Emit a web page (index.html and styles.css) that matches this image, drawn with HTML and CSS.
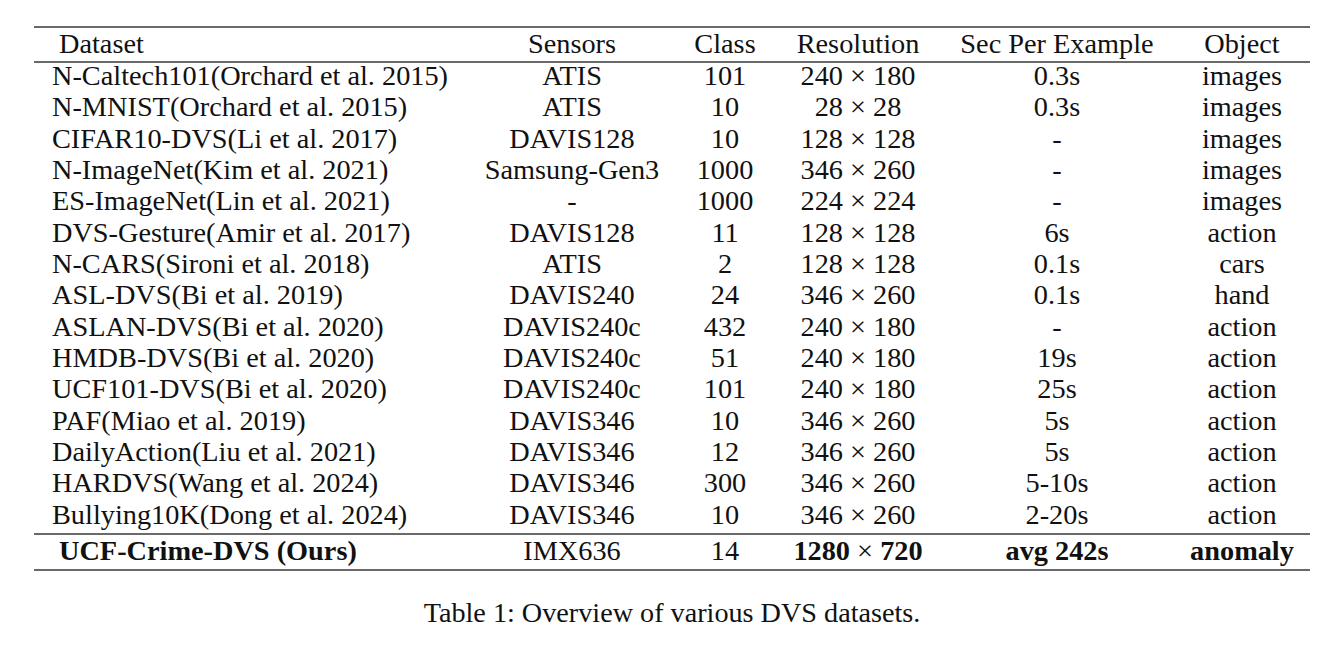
FILE: index.html
```html
<!DOCTYPE html>
<html>
<head>
<meta charset="utf-8">
<link rel="stylesheet" href="styles.css">
</head>
<body>
<div class="page">
<table class="datasets">
<colgroup>
<col class="c-name"><col class="c-sensor"><col class="c-class"><col class="c-res"><col class="c-sec"><col class="c-obj">
</colgroup>
<thead>
<tr><th class="name head-name">Dataset</th><th>Sensors</th><th>Class</th><th>Resolution</th><th>Sec Per Example</th><th>Object</th></tr>
</thead>
<tbody>
<tr><td class="name">N-Caltech101(Orchard et al. 2015)</td><td>ATIS</td><td>101</td><td>240 × 180</td><td>0.3s</td><td>images</td></tr>
<tr><td class="name">N-MNIST(Orchard et al. 2015)</td><td>ATIS</td><td>10</td><td>28 × 28</td><td>0.3s</td><td>images</td></tr>
<tr><td class="name">CIFAR10-DVS(Li et al. 2017)</td><td>DAVIS128</td><td>10</td><td>128 × 128</td><td>-</td><td>images</td></tr>
<tr><td class="name">N-ImageNet(Kim et al. 2021)</td><td>Samsung-Gen3</td><td>1000</td><td>346 × 260</td><td>-</td><td>images</td></tr>
<tr><td class="name">ES-ImageNet(Lin et al. 2021)</td><td>-</td><td>1000</td><td>224 × 224</td><td>-</td><td>images</td></tr>
<tr><td class="name">DVS-Gesture(Amir et al. 2017)</td><td>DAVIS128</td><td>11</td><td>128 × 128</td><td>6s</td><td>action</td></tr>
<tr><td class="name">N-CARS(Sironi et al. 2018)</td><td>ATIS</td><td>2</td><td>128 × 128</td><td>0.1s</td><td>cars</td></tr>
<tr><td class="name">ASL-DVS(Bi et al. 2019)</td><td>DAVIS240</td><td>24</td><td>346 × 260</td><td>0.1s</td><td>hand</td></tr>
<tr><td class="name">ASLAN-DVS(Bi et al. 2020)</td><td>DAVIS240c</td><td>432</td><td>240 × 180</td><td>-</td><td>action</td></tr>
<tr><td class="name">HMDB-DVS(Bi et al. 2020)</td><td>DAVIS240c</td><td>51</td><td>240 × 180</td><td>19s</td><td>action</td></tr>
<tr><td class="name">UCF101-DVS(Bi et al. 2020)</td><td>DAVIS240c</td><td>101</td><td>240 × 180</td><td>25s</td><td>action</td></tr>
<tr><td class="name">PAF(Miao et al. 2019)</td><td>DAVIS346</td><td>10</td><td>346 × 260</td><td>5s</td><td>action</td></tr>
<tr><td class="name">DailyAction(Liu et al. 2021)</td><td>DAVIS346</td><td>12</td><td>346 × 260</td><td>5s</td><td>action</td></tr>
<tr><td class="name">HARDVS(Wang et al. 2024)</td><td>DAVIS346</td><td>300</td><td>346 × 260</td><td>5-10s</td><td>action</td></tr>
<tr class="last-data"><td class="name">Bullying10K(Dong et al. 2024)</td><td>DAVIS346</td><td>10</td><td>346 × 260</td><td>2-20s</td><td>action</td></tr>
<tr class="ours"><td class="name head-name"><b>UCF-Crime-DVS (Ours)</b></td><td>IMX636</td><td>14</td><td><b>1280</b> × <b>720</b></td><td><b>avg 242s</b></td><td><b>anomaly</b></td></tr>
</tbody>
</table>
<p class="caption">Table 1: Overview of various DVS datasets.</p>
</div>
</body>
</html>
```

FILE: styles.css
```css
html, body {
  margin: 0;
  padding: 0;
  background: #ffffff;
}
.page {
  padding: 26px 0 0 34px;
  font-family: "Liberation Serif", "Times New Roman", serif;
  color: #111;
}
.datasets {
  border-collapse: collapse;
  table-layout: fixed;
  width: 1276px;
  font-size: 28.3px;
  border-top: 2px solid #6a6a6a;
  border-bottom: 2px solid #6a6a6a;
}
.c-name { width: 436px; }
.c-sensor { width: 204px; }
.c-class { width: 102px; }
.c-res { width: 164px; }
.c-sec { width: 234px; }
.c-obj { width: 136px; }
.datasets th, .datasets td {
  text-align: center;
  font-weight: normal;
  padding: 0;
  white-space: nowrap;
  vertical-align: top;
}
.datasets th {
  height: 31px;
  line-height: 31px;
  padding-bottom: 2px;
  border-bottom: 2px solid #6a6a6a;
}
.datasets td {
  height: 26px;
  line-height: 26px;
  padding-bottom: 5.35px;
}
.datasets .name {
  text-align: left;
  padding-left: 18px;
}
.datasets .head-name {
  padding-left: 25px;
}
.last-data td {
  border-bottom: 2px solid #6a6a6a;
}
.datasets .ours td {
  height: 30px;
  line-height: 30px;
  padding-top: 1px;
  padding-bottom: 3px;
}
.caption {
  width: 1276px;
  text-align: center;
  font-size: 28.2px;
  margin: 26px 0 0 0;
}
```
